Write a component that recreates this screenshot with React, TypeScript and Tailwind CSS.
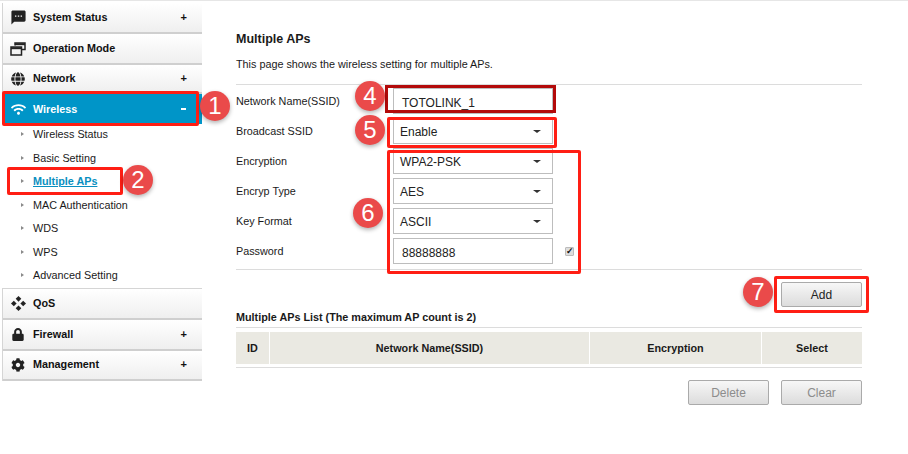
import { ReactNode } from "react";
import { FaCog, FaGlobe, FaLock, FaWifi } from "react-icons/fa";
import { MdSms } from "react-icons/md";

function WindowsIcon() {
  return (
    <svg viewBox="0 0 16 14" className="h-[14px] w-[16px] text-[#222]" fill="none" stroke="currentColor" strokeWidth="1.5">
      <path d="M5 3.5V1h10v6.5h-3.5" />
      <path d="M5 2.2h10" strokeWidth="2" />
      <rect x="1" y="5" width="10.5" height="8" />
      <path d="M1 6.2h10.5" strokeWidth="2" />
    </svg>
  );
}

function QosIcon() {
  return (
    <svg viewBox="0 0 16 16" className="h-[15px] w-[15px] text-[#222]" fill="currentColor">
      <path d="M8 0l3 3-3 3-3-3z" />
      <path d="M8 10l3 3-3 3-3-3z" />
      <path d="M3 5l3 3-3 3-3-3z" />
      <path d="M13 5l3 3-3 3-3-3z" />
    </svg>
  );
}

function MenuRow({ icon, label, mark, height = "h-[31px]" }: { icon: ReactNode; label: string; mark?: string; height?: string }) {
  return (
    <div className={height + " flex items-center border-b-2 border-[#cfcfcf] bg-gradient-to-b from-white to-[#efefef] text-[#111]"}>
      <span className="flex w-[30px] shrink-0 justify-center">{icon}</span>
      <span className="text-[10.8px] font-bold">{label}</span>
      {mark && <span className="ml-auto mr-[15px] text-[11px] font-bold">{mark}</span>}
    </div>
  );
}

function SubItem({ label, current }: { label: string; current?: boolean }) {
  return (
    <div className="flex h-[23.5px] items-center">
      <span className="ml-[19px] mr-[9px] h-0 w-0 border-y-[2px] border-l-[3px] border-y-transparent border-l-[#8a8a8a]" />
      <span className={current ? "text-[10.8px] font-bold text-[#0a8fc0] underline" : "text-[10.8px] text-[#1a1a1a]"}>{label}</span>
    </div>
  );
}

function FormRow({ label, children }: { label: string; children: ReactNode }) {
  return (
    <div className="flex h-[30px] items-center">
      <span className="w-[157px] pt-[1px] text-[10.8px] text-[#1a1a1a]">{label}</span>
      {children}
    </div>
  );
}

function SelectBox({ value }: { value: string }) {
  return (
    <div className="flex h-[26px] w-[160px] items-center border border-[#bdbdbd] bg-white pl-[6px] pr-[11px] pt-[1px] text-[12px] text-[#222]">
      {value}
      <span className="ml-auto h-0 w-0 border-x-[4px] border-t-[3px] border-x-transparent border-t-[#333]" />
    </div>
  );
}

function TextBox({ value }: { value: string }) {
  return (
    <div className="flex h-[26px] w-[160px] items-center border border-[#bdbdbd] bg-white pl-[8px] pt-[3px] text-[12px] text-[#222]">
      {value}
    </div>
  );
}

function ActionButton({ label, muted }: { label: string; muted?: boolean }) {
  return (
    <div
      className={
        "flex h-[25px] w-[81px] items-center justify-center rounded-[2px] border border-[#aaa] bg-gradient-to-b from-[#f7f7f7] to-[#dcdcdc] text-[12px] " +
        (muted ? "text-[#8c8c8c]" : "text-[#222]")
      }
    >
      {label}
    </div>
  );
}

function Badge({ n, className }: { n: number; className: string }) {
  return (
    <div
      className={
        "absolute flex h-[30px] w-[30px] items-center justify-center rounded-full bg-[#ea4a4a] text-[24px] text-white shadow-[0_2px_4px_rgba(0,0,0,0.3)] " +
        className
      }
    >
      {n}
    </div>
  );
}

export default function App() {
  return (
    <div className="relative flex h-[454px] w-[908px] overflow-hidden bg-white font-['Liberation_Sans',Arial,sans-serif]">
      <div className="absolute left-0 top-0 h-px w-full bg-[#e6e6e6]" />

      <aside className="ml-[2px] mt-[3px] w-[200px] shrink-0">
        <div className="border-l border-[#d5d5d5]">
          <MenuRow icon={<MdSms className="h-[17px] w-[17px] text-[#222]" />} label="System Status" mark="+" />
          <MenuRow icon={<WindowsIcon />} label="Operation Mode" />
          <MenuRow height="h-[29px]" icon={<FaGlobe className="h-[14px] w-[14px] text-[#222]" />} label="Network" mark="+" />
        </div>
        <div className="flex h-[30px] items-center bg-[#0095c8] pl-px text-white">
          <span className="flex w-[30px] shrink-0 justify-center"><FaWifi className="h-[13px] w-[15px] text-white" /></span>
          <span className="text-[10.8px] font-bold">Wireless</span>
          <span className="ml-auto mr-[16px] h-[2px] w-[5px] bg-white" />
        </div>
        <div className="mt-[-1.5px]">
          <SubItem label="Wireless Status" />
          <SubItem label="Basic Setting" />
          <SubItem label="Multiple APs" current />
          <SubItem label="MAC Authentication" />
          <SubItem label="WDS" />
          <SubItem label="WPS" />
          <SubItem label="Advanced Setting" />
        </div>
        <div className="mt-[0.5px] border-l border-t border-[#d5d5d5]">
          <MenuRow icon={<QosIcon />} label="QoS" />
          <MenuRow icon={<FaLock className="h-[13px] w-[12px] text-[#222]" />} label="Firewall" mark="+" />
          <MenuRow height="h-[30px]" icon={<FaCog className="h-[14px] w-[14px] text-[#222]" />} label="Management" mark="+" />
        </div>
      </aside>

      <main className="ml-[34px] w-[626px] shrink-0 pt-[32px]">
        <h1 className="text-[12.5px] font-bold leading-[14px] text-[#1a1a1a]">Multiple APs</h1>
        <p className="mt-[12px] text-[10.8px] leading-[12px] text-[#1a1a1a]">This page shows the wireless setting for multiple APs.</p>
        <div className="mt-[14px] border-t border-[#dcdcdc] pt-[1px]">
          <FormRow label="Network Name(SSID)"><TextBox value="TOTOLINK_1" /></FormRow>
          <FormRow label="Broadcast SSID"><SelectBox value="Enable" /></FormRow>
          <FormRow label="Encryption"><SelectBox value="WPA2-PSK" /></FormRow>
          <FormRow label="Encryp Type"><SelectBox value="AES" /></FormRow>
          <FormRow label="Key Format"><SelectBox value="ASCII" /></FormRow>
          <FormRow label="Password">
            <TextBox value="88888888" />
            <span className="ml-[12px] flex h-[9px] w-[9px] items-center justify-center rounded-[1px] border border-[#bbb] bg-[#ddd] text-[9px] font-bold leading-none text-[#111]">✓</span>
          </FormRow>
        </div>
        <div className="mt-[3px] flex justify-end border-t border-[#dcdcdc] pt-[12px]">
          <ActionButton label="Add" />
        </div>
        <h2 className="mt-[4px] text-[10.8px] font-bold leading-[12px] text-[#1a1a1a]">Multiple APs List (The maximum AP count is 2)</h2>
        <div className="mt-[4px] border-t border-[#dcdcdc] pt-[4px]">
          <div className="grid h-[32px] grid-cols-[33px_319px_171px_1fr] gap-x-px text-[10.8px] font-bold text-[#1a1a1a]">
            <div className="flex items-center justify-center bg-[#eae9e2]">ID</div>
            <div className="flex items-center justify-center bg-[#eae9e2]">Network Name(SSID)</div>
            <div className="flex items-center justify-center bg-[#eae9e2]">Encryption</div>
            <div className="flex items-center justify-center bg-[#eae9e2]">Select</div>
          </div>
        </div>
        <div className="mt-[3px] border-t border-[#dcdcdc] pt-[12px]">
          <div className="flex justify-end gap-[12px]">
            <ActionButton label="Delete" muted />
            <ActionButton label="Clear" muted />
          </div>
        </div>
      </main>

      {/* annotations drawn over the page */}
      <div className="absolute left-[2px] top-[91px] h-[35px] w-[197px] rounded-[2px] border-[3px] border-[#ff1e14]" />
      <div className="absolute left-[7px] top-[167px] h-[28px] w-[116px] rounded-[2px] border-[3px] border-[#ff1e14]" />
      <div className="absolute left-[385px] top-[85px] h-[28px] w-[171px] border-[3px] border-[#b30a0a]" />
      <div className="absolute left-[387px] top-[117px] h-[31px] w-[170px] rounded-[2px] border-[3px] border-[#ff1e14]" />
      <div className="absolute left-[387px] top-[150px] h-[124px] w-[194px] rounded-[2px] border-[3px] border-[#ff1e14]" />
      <div className="absolute left-[774px] top-[276px] h-[37px] w-[95px] rounded-[2px] border-[3px] border-[#ff1e14]" />
      <Badge n={1} className="left-[200px] top-[91px]" />
      <Badge n={2} className="left-[123px] top-[165px]" />
      <Badge n={4} className="left-[355px] top-[81px]" />
      <Badge n={5} className="left-[355px] top-[115px]" />
      <Badge n={6} className="left-[353px] top-[198px]" />
      <Badge n={7} className="left-[743px] top-[277px]" />
    </div>
  );
}
